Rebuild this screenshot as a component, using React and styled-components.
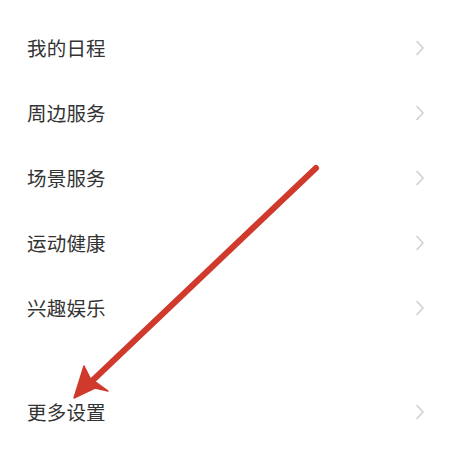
import React from "react";
import styled, { createGlobalStyle } from "styled-components";

const Global = createGlobalStyle`
  html, body { margin: 0; padding: 0; background: #fff; }
  body { font-family: "Noto Sans CJK SC", "Noto Sans", sans-serif; }
`;

const Page = styled.div`
  position: relative;
  width: 452px;
  height: 463px;
  overflow: hidden;
  background: #fff;
`;

const List = styled.div`
  display: flex;
  flex-direction: column;
  padding: 15px 27px 0 27px;
`;

const Row = styled.div`
  display: flex;
  align-items: center;
  justify-content: space-between;
  height: 65px;
  margin-top: ${(p) => (p.$gap ? "39px" : "0")};
`;

const Label = styled.span`
  font-size: 19.5px;
  color: #333;
  letter-spacing: 0.2px;
`;

const Chevron = styled.svg`
  width: 10px;
  height: 16px;
`;

const Overlay = styled.svg`
  position: absolute;
  left: 0;
  top: 0;
  width: 452px;
  height: 463px;
  pointer-events: none;
`;

const items = [
  { label: "我的日程" },
  { label: "周边服务" },
  { label: "场景服务" },
  { label: "运动健康" },
  { label: "兴趣娱乐" },
  { label: "更多设置", gap: true },
];

export default function App() {
  return (
    <Page>
      <Global />
      <List>
        {items.map((it) => (
          <Row key={it.label} $gap={it.gap}>
            <Label>{it.label}</Label>
            <Chevron viewBox="0 0 10 16">
              <path d="M2 1.5 L8 8 L2 14.5" fill="none" stroke="#d0d0d0" strokeWidth="1.6" strokeLinecap="round" strokeLinejoin="round" />
            </Chevron>
          </Row>
        ))}
      </List>
      <Overlay viewBox="0 0 452 463">
        <line x1="316" y1="168" x2="92" y2="381" stroke="#cf3a2c" strokeWidth="6" strokeLinecap="round" />
        <path d="M74 398 L84 366 L90 378 L108 391 L95 388 Z" fill="#cf3a2c" stroke="#cf3a2c" strokeWidth="1.5" strokeLinejoin="round" />
      </Overlay>
    </Page>
  );
}
